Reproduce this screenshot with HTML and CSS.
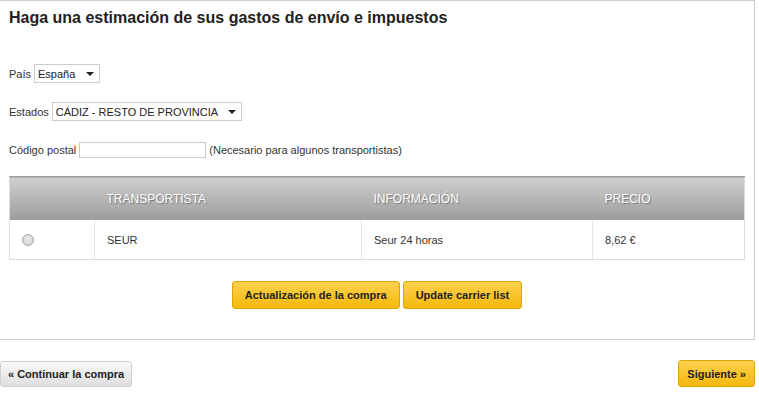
FILE: index.html
```html
<!DOCTYPE html>
<html lang="es">
<head>
  <meta charset="UTF-8">
  <title>Estimación de gastos de envío</title>
  <link rel="stylesheet" href="styles.css">
</head>
<body>
  <div id="estimacion">
    <h1 class="titulo">Haga una estimación de sus gastos de envío e impuestos</h1>

    <div class="campos">
      <div class="fila">
        <label>País</label>
        <span class="desplegable pais">
          <select><option>España</option></select>
        </span>
      </div>
      <div class="fila">
        <label>Estados</label>
        <span class="desplegable estados">
          <select><option>CÁDIZ - RESTO DE PROVINCIA</option></select>
        </span>
      </div>
      <div class="fila">
        <label>Código postal</label>
        <input type="text" class="cp">
        <span class="nota">(Necesario para algunos transportistas)</span>
      </div>
    </div>

    <table class="transportistas">
      <thead>
        <tr>
          <th class="col-radio"></th>
          <th class="col-nombre">Transportista</th>
          <th class="col-info">Información</th>
          <th class="col-precio">Precio</th>
        </tr>
      </thead>
      <tbody>
        <tr>
          <td class="col-radio"><input type="radio" name="carrier" class="radio"></td>
          <td>SEUR</td>
          <td>Seur 24 horas</td>
          <td>8,62 €</td>
        </tr>
      </tbody>
    </table>

    <div class="acciones">
      <button class="boton amarillo">Actualización de la compra</button>
      <button class="boton amarillo">Update carrier list</button>
    </div>
  </div>

  <div class="navegacion">
    <button class="boton gris">« Continuar la compra</button>
    <button class="boton amarillo grande">Siguiente »</button>
  </div>
</body>
</html>
```

FILE: styles.css
```css
html, body {
  margin: 0;
  padding: 0;
  background: #fff;
  font-family: "Liberation Sans", Arial, sans-serif;
  font-size: 11px;
  color: #333;
}

#estimacion {
  width: 736px;
  border: 1px solid #cfcfcf;
  border-left: none;
  padding: 6px 9px 30px 9px;
}

.titulo {
  margin: 0;
  font-size: 16px;
  line-height: 22px;
  color: #222;
}

.campos {
  display: flex;
  flex-direction: column;
  gap: 19px;
  margin-top: 35px;
}

.fila {
  display: flex;
  align-items: center;
  height: 19px;
  gap: 3px;
}

.desplegable {
  position: relative;
  display: inline-block;
}
.desplegable select {
  appearance: none;
  -webkit-appearance: none;
  height: 19px;
  border: 1px solid #ccc;
  background: #fff;
  font-family: inherit;
  font-size: 11px;
  color: #222;
  padding: 0 22px 0 3px;
  border-radius: 0;
}
.desplegable::after {
  content: "";
  position: absolute;
  right: 6px;
  top: 8px;
  border-left: 4px solid transparent;
  border-right: 4px solid transparent;
  border-top: 4px solid #222;
  pointer-events: none;
}
.pais select { width: 66px; }

.cp {
  width: 121px;
  height: 12px;
  border: 1px solid #ccc;
  padding: 1px 2px;
  font-size: 11px;
}

.transportistas {
  width: 736px;
  margin-top: 17px;
  border-collapse: collapse;
  border: 1px solid #ddd;
}
.transportistas th {
  height: 43px;
  padding: 0 12px;
  text-align: left;
  font-weight: normal;
  font-size: 12px;
  text-transform: uppercase;
  color: #fff;
  text-shadow: 1px 1px 1px #777;
  background: linear-gradient(#cfcfcf, #9c9c9c);
  border-top: 1px solid #999;
}
.transportistas td {
  height: 39px;
  padding: 0 12px;
  border-left: 1px solid #e4e4e4;
  border-bottom: 1px solid #ddd;
  color: #333;
}
.transportistas td.col-radio { border-left: none; }
.col-radio { width: 60px; }
.col-nombre { width: 243px; }
.col-info { width: 207px; }

.radio {
  appearance: none;
  -webkit-appearance: none;
  width: 12px;
  height: 12px;
  margin: 0;
  border: 1px solid #aaa;
  border-radius: 50%;
  background: radial-gradient(circle at 50% 40%, #eee, #c8c8c8);
  vertical-align: middle;
}

.acciones {
  display: flex;
  justify-content: center;
  gap: 3px;
  margin-top: 21px;
}

.boton {
  height: 28px;
  padding: 0 12px;
  font-family: inherit;
  font-size: 11px;
  font-weight: bold;
  color: #222;
  border-radius: 3px;
  cursor: pointer;
}
.boton.amarillo {
  background: linear-gradient(#fdd24e, #f5b70c);
  border: 1px solid #dba50a;
}
.boton.gris {
  height: 26px;
  padding: 0 7px;
  background: linear-gradient(#fafafa, #dedede);
  border: 1px solid #cfcfcf;
}
.boton.grande {
  height: 27px;
  padding: 0 8px;
}

.navegacion {
  display: flex;
  justify-content: space-between;
  align-items: center;
  width: 755px;
  margin-top: 20px;
}
```
